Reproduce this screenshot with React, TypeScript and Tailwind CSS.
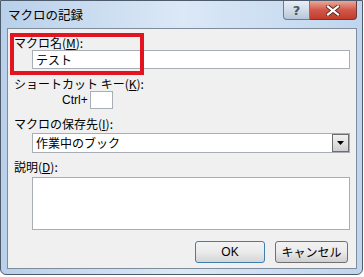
import React from "react";

const jp = { fontFamily: '"Noto Sans CJK JP", "Noto Sans", sans-serif' };

export default function App() {
  return (
    <div className="w-[364px] h-[277px] bg-white relative overflow-hidden" style={jp}>
      {/* window */}
      <div className="w-[363px] h-[275px] rounded-b-[6px] border border-[#4d5b6c] bg-gradient-to-r from-[#b9d0ea] via-[#dbe8f6] to-[#bfd5ee] flex flex-col">
        {/* title bar */}
        <div className="h-[27px] flex items-start">
          <div className="pl-[7px] pt-[6px] text-[12.5px] leading-[16px] text-black">マクロの記録</div>
          <div className="ml-auto mr-[5px] flex">
            <div className="w-[27px] h-[19px] rounded-bl-[4px] border border-t-0 border-[#6d7d90] bg-gradient-to-b from-[#e8eef5] via-[#d2dce8] to-[#b7c6d7] flex items-center justify-center">
              <span className="text-[13px] leading-none font-bold text-[#4a5563]" style={{ fontFamily: '"DejaVu Sans", sans-serif' }}>?</span>
            </div>
            <div className="w-[47px] h-[19px] rounded-br-[4px] border border-l-0 border-t-0 border-[#6d3b35] bg-gradient-to-b from-[#e9a899] via-[#d0574a] to-[#c23b2a] flex items-center justify-center">
              <svg width="14" height="11" viewBox="0 0 14 11">
                <path d="M2 1.5 L12 9.5 M12 1.5 L2 9.5" stroke="#5a2a24" strokeWidth="4" strokeLinecap="square" />
                <path d="M2 1.5 L12 9.5 M12 1.5 L2 9.5" stroke="#ffffff" strokeWidth="2.2" strokeLinecap="square" />
              </svg>
            </div>
          </div>
        </div>
        {/* client */}
        <div className="ml-[6px] mr-[5px] h-[241px] border border-[#7f8c9b] bg-[#f0f0f0] relative flex flex-col text-[12px] text-black">
          <div className="ml-[6px] mt-[7px] h-[14px] leading-[14px]">マクロ名(<span className="underline">M</span>):</div>
          <div className="ml-[24px] w-[318px] h-[19px] bg-white border border-[#a9aeb5] flex items-center pl-[3px] leading-none">テスト</div>
          <div className="ml-[6px] mt-[8px] h-[14px] leading-[14px]">ショートカット キー(<span className="underline">K</span>):</div>
          <div className="flex items-center h-[18px]">
            <span className="ml-[54px] w-[28px] leading-none" style={{ fontFamily: '"Liberation Sans", sans-serif' }}>Ctrl+</span>
            <div className="w-[23px] h-[18px] bg-white border border-[#a9aeb5]" />
          </div>
          <div className="ml-[6px] mt-[8px] h-[14px] leading-[14px]">マクロの保存先(<span className="underline">I</span>):</div>
          <div className="ml-[24px] mt-[2px] w-[318px] h-[20px] bg-white border border-[#a9aeb5] flex items-center">
            <span className="pl-[3px] leading-none flex-1">作業中のブック</span>
            <div className="w-[17px] h-[18px] border border-[#6e6e6e] bg-gradient-to-b from-[#f2f2f2] to-[#cfcfcf] flex items-center justify-center">
              <svg width="7" height="4" viewBox="0 0 7 4"><path d="M0 0 H7 L3.5 4 Z" fill="#000" /></svg>
            </div>
          </div>
          <div className="ml-[6px] mt-[7px] h-[14px] leading-[14px]">説明(<span className="underline">D</span>):</div>
          <div className="ml-[24px] mt-[3px] w-[318px] h-[53px] bg-white border border-[#a9aeb5]" />
          <div className="mt-[11px] flex">
            <div className="ml-[187px] w-[70px] h-[22px] rounded-[3px] border border-[#3c7fb1] bg-gradient-to-b from-[#f2f2f2] via-[#ebebeb] to-[#d5d5d5] flex items-center justify-center leading-none" style={{ fontFamily: '"Liberation Sans", sans-serif' }}>OK</div>
            <div className="ml-[10px] w-[73px] h-[22px] rounded-[3px] border border-[#707070] bg-gradient-to-b from-[#f2f2f2] via-[#ebebeb] to-[#cfcfcf] flex items-center justify-center leading-none">キャンセル</div>
          </div>
          {/* red annotation box */}
          <div className="absolute left-[2px] top-[4px] w-[134px] h-[42px] border-[4px] border-[#e3141f]" />
        </div>
      </div>
    </div>
  );
}
